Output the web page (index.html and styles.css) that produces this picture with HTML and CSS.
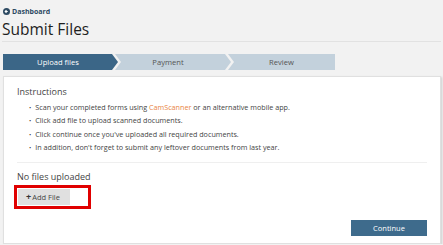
FILE: index.html
```html
<!DOCTYPE html>
<html>
<head>
    <title>Submit Files</title>
    <link rel="stylesheet" href="styles.css">
</head>
<body>
    <div class="page">
        <a class="back" href="#">
            <svg width="7" height="7" viewBox="0 0 10 10"><circle cx="5" cy="5" r="5" fill="#2d4a62"/><path d="M6.8 5H3.4M5 3.2L3.2 5 5 6.8" stroke="#fff" stroke-width="1.6" fill="none"/></svg>
            Dashboard
        </a>
        <h1>Submit Files</h1>

        <div class="steps">
            <div class="step first active">Upload files</div>
            <div class="step mid">Payment</div>
            <div class="step last">Review</div>
        </div>

        <div class="card">
            <h3>Instructions</h3>
            <ul>
                <li>Scan your completed forms using <a href="#">CamScanner</a> or an alternative mobile app.</li>
                <li>Click add file to upload scanned documents.</li>
                <li>Click continue once you've uploaded all required documents.</li>
                <li>In addition, don't forget to submit any leftover documents from last year.</li>
            </ul>
            <hr>
            <div class="files">No files uploaded</div>
            <div class="highlight">
                <button class="add"><span class="plus">+</span>Add File</button>
            </div>
            <div class="actions">
                <button class="continue">Continue</button>
            </div>
        </div>
    </div>
</body>
</html>
```

FILE: styles.css
```css
body { margin: 0; background: #f2f2f2; font-family: "Open Sans", "Noto Sans", sans-serif; color: #333; }
.page { padding: 7px 2px 0 3px; }
.back { display: flex; align-items: center; gap: 2px; color: #2d4a62; font-size: 7px; font-weight: bold; text-decoration: none; height: 9px; }
h1 { margin: 3px 0 0 -1px; font-size: 15.5px; font-weight: normal; color: #1e1e1e; line-height: 20px; padding-bottom: 2px; border-bottom: 1px solid #e2e2e2; }
.steps { display: flex; width: 332px; margin-top: 12px; height: 16px; }
.step { height: 16px; line-height: 16px; font-size: 7.6px; text-align: center; color: #555; background: #c3d1dc; box-sizing: border-box; }
.step.active { background: #3b6687; color: #fff; }
.first { width: 115px; padding-right: 5px; clip-path: polygon(0 0, calc(100% - 6px) 0, 100% 50%, calc(100% - 6px) 100%, 0 100%); }
.mid { width: 116px; margin-left: -3px; padding-right: 10px; clip-path: polygon(0 0, calc(100% - 6px) 0, 100% 50%, calc(100% - 6px) 100%, 0 100%, 6px 50%); }
.last { width: 107px; margin-left: -3px; clip-path: polygon(0 0, 100% 0, 100% 100%, 0 100%, 6px 50%); }
.card { background: #fff; margin-top: 6px; border: 1px solid #e0e0e0; box-shadow: 1px 1px 2px rgba(0,0,0,0.15); padding: 9px 13px 7px 13px; height: 150px; width: 410px; }
h3 { margin: 0; font-size: 9px; font-weight: normal; color: #444; line-height: 12px; }
ul { margin: 3px 0 0; padding-left: 19px; font-size: 7.2px; color: #444; line-height: 12.3px; list-style: none; }
li::before { content: "\2022"; margin-left: -7px; margin-right: 4px; font-size: 6px; }
ul a { color: #e9853f; text-decoration: none; }
hr { border: 0; border-top: 1px solid #efefef; margin: 8px 0 0; }
.files { font-size: 9px; color: #444; margin-top: 8px; line-height: 12px; }
.highlight { display: inline-block; border: 3px solid #e00000; padding: 1px 18px 1px 1px; margin: 1px 0 0 -3px; }
.add { display: block; border: 0; background: #e0e0e0; color: #444; font-family: inherit; font-size: 7.5px; padding: 0 10px 0 8px; height: 16px; }
.plus { font-weight: bold; font-size: 9px; margin-right: 1px; color: #333; }
.actions { display: flex; justify-content: flex-end; margin-top: 11px; }
.continue { border: 0; background: #3e6b8c; color: #fff; font-family: inherit; font-size: 7.5px; width: 76px; height: 16px; }
```
